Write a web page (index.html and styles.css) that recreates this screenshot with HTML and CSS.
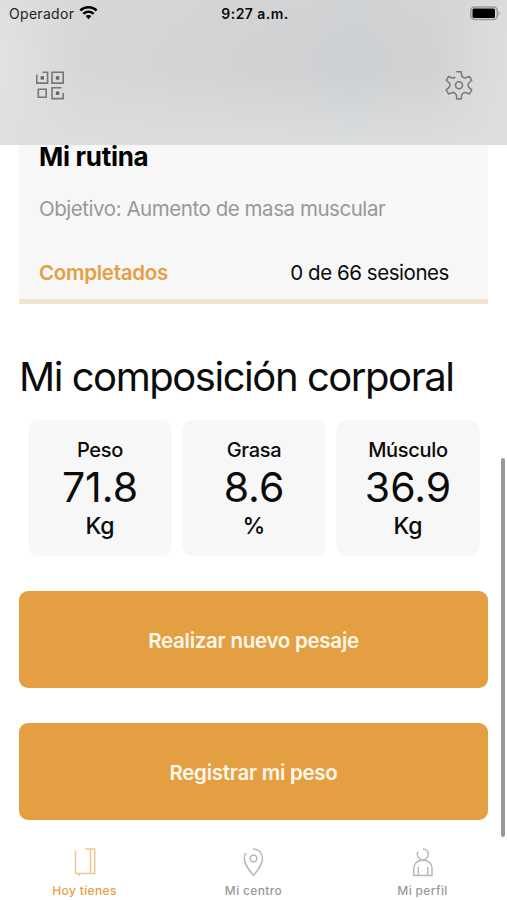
FILE: index.html
```html
<!DOCTYPE html>
<html lang="es">
<head>
    <meta charset="UTF-8"/>
    <title>Hoy tienes</title>
    <link rel="stylesheet" href="styles.css">
</head>
<body>
<header class="top-bar">
    <div class="status-bar">
        <div class="carrier">
            <span>Operador</span>
            <svg width="19" height="14" viewBox="0 0 19 14">
                <path d="M9.500 0C6 0 2.900 1.300.5 3.600l1.700 1.800C4.200 3.500 6.700 2.500 9.500 2.500s5.300 1 7.300 2.900l1.700-1.800C16.100 1.300 13 0 9.500 0z"/>
                <path d="M9.500 4.500c-2.300 0-4.400.9-6 2.400l1.800 1.800c1.100-1.100 2.600-1.700 4.200-1.700s3.100.6 4.200 1.700l1.800-1.800c-1.600-1.500-3.700-2.400-6-2.400z"/>
                <path d="M9.500 9c-1.100 0-2.100.4-2.900 1.100l2.900 3.100 2.900-3.100C11.600 9.400 10.600 9 9.500 9z"/>
            </svg>
        </div>
        <div class="clock">9:27 a.m.</div>
        <svg class="battery" width="31" height="15" viewBox="0 0 31 15">
            <rect x="0.800" y="1" width="26.500" height="12.500" rx="4" fill="none" stroke="#999" stroke-width="1.600"/>
            <rect x="2.500" y="2.500" width="22.500" height="9.500" rx="1.500"/>
            <path d="M28.500 5.200c1.400.5 1.400 4.100 0 4.600z" fill="#999"/>
        </svg>
    </div>
    <div class="nav-bar">
        <svg width="30" height="30" viewBox="0 0 30 30" fill="none" stroke="#777" stroke-width="1.600">
            <path d="M1.800 4.500V13.100H12.600V2.300H7.500"/>
            <path d="M17 2.300H28.200V13.100H17z"/>
            <path d="M3.300 19.200H11.200V27.200H3.300z"/>
            <path d="M26.500 17.800H17V28.600H28.200V23"/>
            <g fill="#666" stroke="none">
                <rect x="5.600" y="6.200" width="3.400" height="3.400"/>
                <rect x="20.900" y="6.200" width="3.400" height="3.400"/>
                <rect x="20.900" y="21.500" width="3.400" height="3.400"/>
            </g>
        </svg>
        <svg width="30" height="30" viewBox="0 0 30 30" fill="none" stroke="#777" stroke-width="1.500" stroke-linejoin="round">
            <path d="M12.200 1.800H17.200L17.600 5C18 7 20 8.400 22 7.800L25.400 6.400L27.800 10.300L25.200 12.500C23.600 14 23.600 16.200 25.200 17.700L27.800 19.800L25.400 24L22 22.600C20 22 18 23.400 17.600 25.300L17.200 28.900H12.800L12.400 25.300C12 23.400 10 22 8 22.600L4.600 24L2.200 19.800L4.800 17.700C6.400 16.200 6.400 14 4.800 12.500L2.200 10.300L4.600 6.400L7.500 7.800C8.700 8.300 10.200 8 11.200 7.100"/>
            <circle cx="15" cy="15.300" r="3.500"/>
        </svg>
    </div>
</header>

<main class="content">
    <section class="routine-card">
        <h2>Mi rutina</h2>
        <p class="goal">Objetivo: Aumento de masa muscular</p>
        <div class="progress">
            <span class="done">Completados</span>
            <span class="sessions">0 de 66 sesiones</span>
        </div>
    </section>

    <h1>Mi composición corporal</h1>

    <section class="stats">
        <div class="stat">
            <div class="label">Peso</div>
            <div class="value">71.8</div>
            <div class="unit">Kg</div>
        </div>
        <div class="stat">
            <div class="label">Grasa</div>
            <div class="value">8.6</div>
            <div class="unit">%</div>
        </div>
        <div class="stat">
            <div class="label">Músculo</div>
            <div class="value">36.9</div>
            <div class="unit">Kg</div>
        </div>
    </section>

    <div class="actions">
        <button>Realizar nuevo pesaje</button>
        <button>Registrar mi peso</button>
    </div>
</main>
<div class="scrollbar"></div>

<nav class="tab-bar">
    <div class="tab active">
        <svg width="24" height="30" viewBox="0 0 24 30">
            <path d="M2.500 3.500V26.500H21.700V2H12M17.500 2V26M6 26.500V29"/>
        </svg>
        <span>Hoy tienes</span>
    </div>
    <div class="tab">
        <svg width="24" height="30" viewBox="0 0 24 30">
            <path d="M11 2C16.500 1.800 20.500 5.800 20.500 11.300C20.500 17.500 16 23 11.500 28.500C7 23 2.300 17.500 2.300 11.300C2.300 9.200 2.800 7.400 4 6"/>
            <circle cx="11.500" cy="11.500" r="3.400"/>
        </svg>
        <span>Mi centro</span>
    </div>
    <div class="tab">
        <svg width="24" height="30" viewBox="0 0 24 30">
            <path d="M12 2C15.300 2 17.200 4.500 17.200 7.400C17.200 10.400 14.700 12.900 11.800 12.900C8.900 12.900 6.300 10.400 6.300 7.400C6.300 6.400 6.600 5.400 7.100 4.700"/>
            <path d="M7.300 28.500H2.800V21C2.800 16.500 6.500 13.200 11.900 13.200S21 16.500 21 21V28.500H7.300V20M16.800 20V28.500"/>
        </svg>
        <span>Mi perfil</span>
    </div>
</nav>
</body>
</html>
```

FILE: styles.css
```css
* {
    box-sizing: border-box;
}

body {
    margin: 0;
    height: 900px;
    display: flex;
    flex-direction: column;
    background: #ffffff;
    color: #0b0b0b;
    font-family: Inter, "Liberation Sans", sans-serif;
    overflow: hidden;
}

h1, h2, p {
    margin: 0;
}

svg {
    display: block;
}

.top-bar {
    height: 145px;
    flex: none;
    background:
        linear-gradient(to bottom, rgba(216, 216, 216, 0.3), rgba(216, 216, 216, 0) 35%, rgba(221, 223, 224, 0) 50%, rgba(221, 223, 224, 0.85)),
        linear-gradient(to right, #e2e2e2, #d7d7d7 16%, #d3d3d3 45%, #cdd0d3 70%, #d2d2d2 85%, #dedede);
}

.status-bar {
    height: 27px;
    padding: 0 6px 0 9px;
    display: grid;
    grid-template-columns: 1fr auto 1fr;
    align-items: center;
    font-size: 14px;
}

.carrier {
    display: flex;
    align-items: center;
    gap: 5px;
    color: #222222;
    letter-spacing: 0.3px;
}

.carrier svg {
    margin-top: -1px;
}

.clock {
    font-weight: 600;
    letter-spacing: 0.45px;
}

.battery {
    justify-self: end;
    margin-top: -1px;
}

.nav-bar {
    display: flex;
    justify-content: space-between;
    padding: 43px 33px 0 35px;
}

.content {
    padding: 0 19px;
    height: 691px;
}

.routine-card {
    height: 159px;
    padding: 1px 39px 0 20px;
    background: #f7f7f7;
    border-bottom: 5px solid #f3e4cd;
}

.routine-card h2 {
    font-size: 26px;
    line-height: 22px;
    font-weight: 700;
    letter-spacing: -0.3px;
    color: #000000;
}

.goal {
    margin-top: 29px;
    font-size: 20.5px;
    line-height: 24px;
    letter-spacing: -0.45px;
    color: #999999;
}

.progress {
    display: flex;
    justify-content: space-between;
    margin-top: 40px;
    font-size: 20.5px;
    line-height: 24px;
}

.done {
    font-weight: 600;
    letter-spacing: -0.27px;
    color: #e59f43;
}

.sessions {
    letter-spacing: -0.45px;
}

h1 {
    margin-top: 49px;
    font-size: 40px;
    line-height: 48px;
    font-weight: 400;
    letter-spacing: -1.45px;
    white-space: nowrap;
}

.stats {
    display: grid;
    grid-template-columns: repeat(3, 144px);
    gap: 10px;
    margin: 19px 0 0 9px;
}

.stat {
    height: 136px;
    padding-top: 18px;
    border-radius: 11px;
    background: #f7f7f7;
    text-align: center;
}

.label {
    font-size: 20px;
    line-height: 24px;
    font-weight: 500;
    letter-spacing: -0.3px;
}

.value {
    font-size: 41px;
    line-height: 50px;
}

.unit {
    font-size: 23px;
    line-height: 28px;
    font-weight: 500;
}

.actions {
    display: grid;
    gap: 35px;
    margin-top: 35px;
}

button {
    height: 97px;
    padding: 2px 0 0;
    border: none;
    border-radius: 9px;
    background: #e59f43;
    color: #fff8ea;
    font-family: inherit;
    font-size: 20.5px;
    font-weight: 600;
    letter-spacing: -0.26px;
}

.scrollbar {
    position: absolute;
    top: 458px;
    right: 2px;
    width: 4px;
    height: 379px;
    border-radius: 2px;
    background: #999999;
}

.tab-bar {
    flex: none;
    display: grid;
    grid-template-columns: repeat(3, 1fr);
    padding-top: 11px;
}

.tab {
    display: flex;
    flex-direction: column;
    align-items: center;
    gap: 6px;
    color: #999999;
    font-size: 12px;
    line-height: 16px;
    font-weight: 500;
    letter-spacing: 0.35px;
}

.tab svg {
    fill: none;
    stroke: #b9b9b9;
    stroke-width: 1.5;
}

.tab.active {
    color: #e59f43;
}

.tab.active svg {
    stroke: #efc68f;
}
```
